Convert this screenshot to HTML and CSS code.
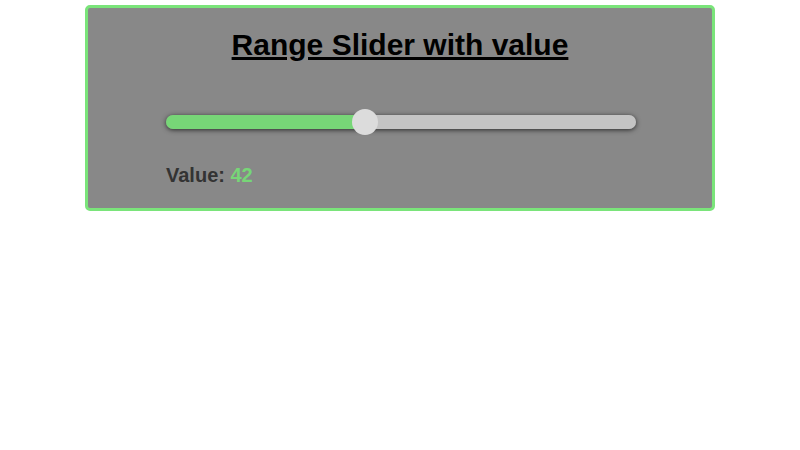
FILE: index.html
```html
<!DOCTYPE html>
<html lang="en">
<head>
<meta charset="UTF-8" />
<title>Range Slider with value</title>
<meta name="viewport" content="width=device-width, initial-scale=1" />
<link rel="stylesheet" href="styles.css">
</head>
<body>

<div class="slider-box">
  <h1>Range Slider with value</h1>
  <div class="slider-wrap">
    <input type="range" class="slider" min="0" max="100" value="42" style="--fill:42.5%">
    <p class="value">Value: <span>42</span></p>
  </div>
</div>

</body>
</html>
```

FILE: styles.css
```css
/* ---- page ---- */
body{background:#fff;font-family:"Liberation Sans",Arial,sans-serif;margin:0;padding:5px 0 0}
.slider-box{box-sizing:border-box;width:630px;margin:0 auto;background:#888;border:3px solid #7ae47a;border-radius:5px;padding:20px 0 21px}
.slider-box h1{margin:0;text-align:center;font-size:30px;text-decoration:underline;color:#000}

/* ---- slider ---- */
.slider-wrap{width:470px;margin-left:78px}
.slider{-webkit-appearance:none;appearance:none;display:block;width:100%;height:14px;margin:53px 0 0;border-radius:7px;outline:none;
  background:linear-gradient(to right,#77d677 var(--fill),#c4c4c4 var(--fill));
  box-shadow:0 1px 5px rgba(0,0,0,.7)}
.slider::-webkit-slider-thumb{-webkit-appearance:none;appearance:none;width:26px;height:26px;border-radius:50%;background:#dcdcdc;cursor:pointer}
.value{margin:35px 0 0;font-size:20px;font-weight:bold;color:#333}
.value span{color:#77d677}
```
